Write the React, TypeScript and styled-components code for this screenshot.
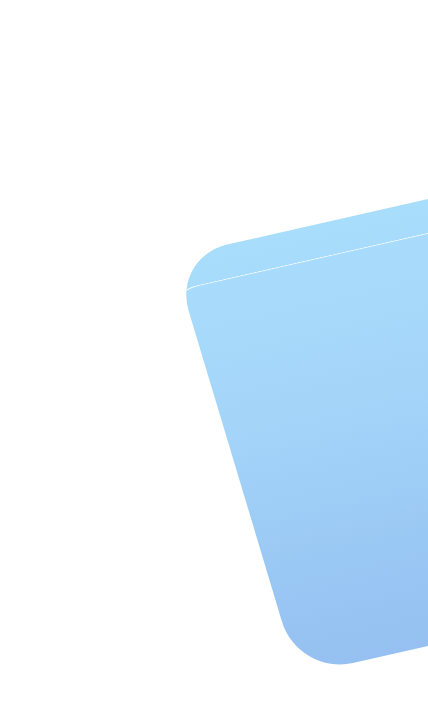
import React from 'react'
import styled, {createGlobalStyle} from 'styled-components'

const GlobalStyle = createGlobalStyle`
  html, body {
    margin: 0;
    padding: 0;
    background: #ffffff;
    overflow: hidden;
  }
  body {
    font-family: 'Liberation Sans', Arial, sans-serif;
  }
`

const Stage = styled.div`
  width: 100vw;
  height: 100vh;
  overflow: hidden;
  background: #ffffff;
`

// the card is drawn in its own coords and then tilted onto the page
const Card = styled.div`
  width: 460px;
  height: 437px;
  border-radius: 56px;
  overflow: hidden;
  transform-origin: 0 0;
  transform: matrix(0.976, -0.222, 0.2876, 0.9577, 172.5, 257);
  background: linear-gradient(180deg, #a9ddfc 0%, #a4d5f9 40%, #9ac8f4 75%, #95c0f1 100%);
`

// thin highlight edge of the sheet lying on top
const Sheet = styled.div<{$offset: number}>`
  margin-top: ${(p) => p.$offset}px;
  margin-left: -24px;
  width: 600px;
  height: 600px;
  border-top: 1.5px solid rgba(255, 255, 255, 0.9);
  border-left: 1.5px solid rgba(255, 255, 255, 0.9);
  border-top-left-radius: 40px;
`

const App: React.FC = () => {
  return (
    <>
      <GlobalStyle />
      <Stage>
        <Card>
          <Sheet $offset={33} />
        </Card>
      </Stage>
    </>
  )
}

export default App
